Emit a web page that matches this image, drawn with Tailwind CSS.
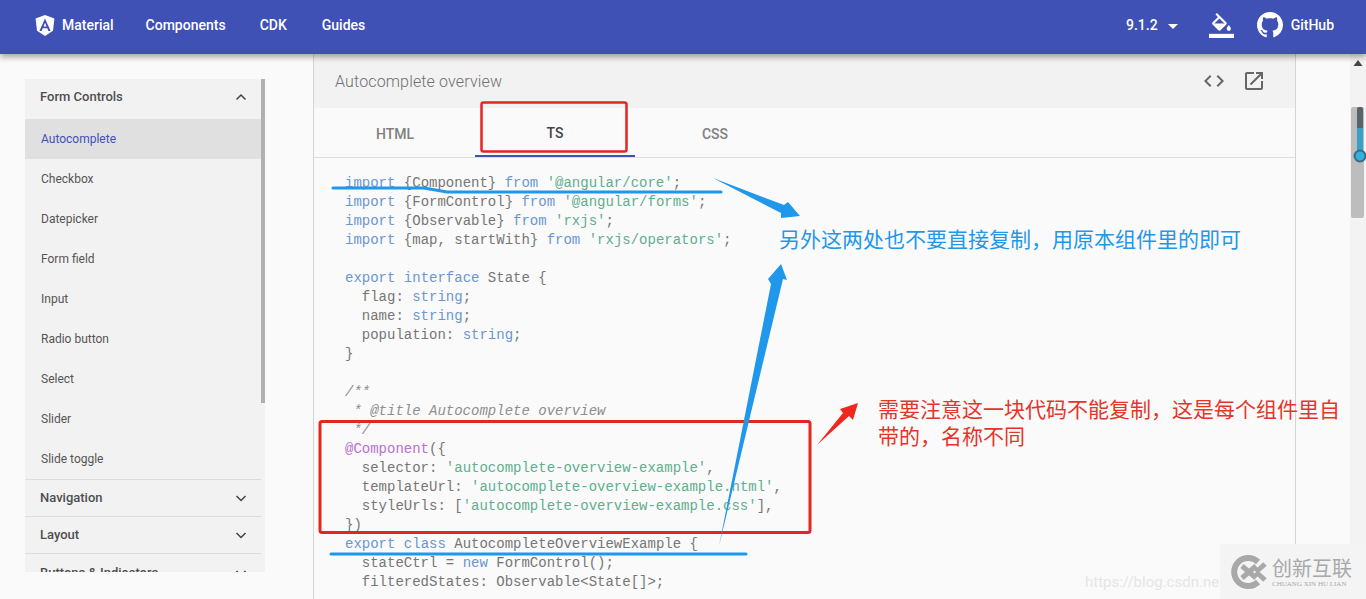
<!DOCTYPE html>
<html lang="zh-CN">
<head>
    <meta charset="UTF-8">
    <meta name="viewport" content="width=device-width, initial-scale=1.0">
    <title>Autocomplete overview</title>
    <script src="https://cdn.jsdelivr.net/npm/@tailwindcss/browser@4"></script>
</head>
<body class="relative h-[599px] overflow-hidden bg-[#fafafa] font-['Roboto',sans-serif]">
    <!-- Top toolbar -->
    <header class="relative z-10 flex h-[54px] items-center bg-[#3f51b5] pb-[4px] pl-[35px] pr-[32px] text-[14px] font-medium text-white shadow-[0_3px_6px_rgba(0,0,0,0.35)]">
        <svg class="mr-[7px] h-[21px] w-[20px]" viewBox="0 0 20 21">
            <path fill="#fff" d="M10 0 L19.4 3.4 L18 15.8 L10 21 L2 15.8 L0.6 3.4 Z"/>
            <path fill="#3f51b5" d="M10 3.6 L4.4 16 H6.6 L7.7 13.2 H12.3 L13.4 16 H15.6 Z M8.5 11.4 L10 7.8 L11.5 11.4 Z"/>
        </svg>
        <a class="mr-[32px]">Material</a>
        <a class="mr-[34px]">Components</a>
        <a class="mr-[35px]">CDK</a>
        <a>Guides</a>
        <div class="ml-auto flex items-center">
            <span>9.1.2</span>
            <span class="ml-[10px] mt-[2px] h-0 w-0 border-x-[5px] border-t-[5px] border-x-transparent border-t-white"></span>
            <svg class="ml-[31px] h-[25px] w-[25px]" viewBox="0 0 24 24" fill="#fff">
                <path d="M16.56 8.94L7.62 0 6.21 1.41l2.38 2.38-5.15 5.15c-.59.59-.59 1.54 0 2.12l5.5 5.5c.29.29.68.44 1.06.44s.77-.15 1.06-.44l5.5-5.5c.59-.58.59-1.53 0-2.12zM5.21 10L10 5.21 14.79 10H5.21zM19 11.5s-2 2.17-2 3.5c0 1.1.9 2 2 2s2-.9 2-2c0-1.33-2-3.5-2-3.5z"/>
                <path d="M0 20h24v4H0z"/>
            </svg>
            <svg class="ml-[23px] h-[26px] w-[26px]" viewBox="0 0 16 16" fill="#fff">
                <path d="M8 0C3.58 0 0 3.58 0 8c0 3.54 2.29 6.53 5.47 7.59.4.07.55-.17.55-.38 0-.19-.01-.82-.01-1.49-2.01.37-2.53-.49-2.69-.94-.09-.23-.48-.94-.82-1.13-.28-.15-.68-.52-.01-.53.63-.01 1.08.58 1.23.82.72 1.21 1.87.87 2.33.66.07-.52.28-.87.51-1.07-1.78-.2-3.64-.89-3.64-3.95 0-.87.31-1.59.82-2.15-.08-.2-.36-1.02.08-2.12 0 0 .67-.21 2.2.82.64-.18 1.32-.27 2-.27.68 0 1.36.09 2 .27 1.53-1.04 2.2-.82 2.2-.82.44 1.1.16 1.92.08 2.12.51.56.82 1.27.82 2.15 0 3.07-1.87 3.75-3.65 3.95.29.25.54.73.54 1.48 0 1.07-.01 1.93-.01 2.2 0 .21.15.46.55.38A8.013 8.013 0 0016 8c0-4.42-3.58-8-8-8z"/>
            </svg>
            <span class="ml-[8px]">GitHub</span>
        </div>
    </header>

    <div class="flex h-[545px]">
        <!-- Side nav -->
        <div class="w-[313px] shrink-0 pl-[25px] pt-[25px]">
            <div class="flex h-[493px] w-[240px] overflow-hidden bg-[#f2f2f2]">
                <nav class="w-[236px] shrink-0 text-[12px] text-[#555]">
                    <div class="flex h-[40px] items-center justify-between pb-[4px] pl-[15px] pr-[14px] text-[13px] font-medium text-[#4f4f4f]">
                        <span>Form Controls</span>
                        <svg class="h-[12px] w-[12px]" viewBox="0 0 12 12" fill="none" stroke="#444" stroke-width="1.5"><path d="M1.5 8.5 L6 4 L10.5 8.5"/></svg>
                    </div>
                    <a class="flex h-[40px] items-center bg-[#e0e0e0] pl-[16px] text-[#3f51b5]">Autocomplete</a>
                    <a class="flex h-[40px] items-center pl-[16px]">Checkbox</a>
                    <a class="flex h-[40px] items-center pl-[16px]">Datepicker</a>
                    <a class="flex h-[40px] items-center pl-[16px]">Form field</a>
                    <a class="flex h-[40px] items-center pl-[16px]">Input</a>
                    <a class="flex h-[40px] items-center pl-[16px]">Radio button</a>
                    <a class="flex h-[40px] items-center pl-[16px]">Select</a>
                    <a class="flex h-[40px] items-center pl-[16px]">Slider</a>
                    <a class="flex h-[41px] items-center border-b border-[#dcdcdc] pl-[16px]">Slide toggle</a>
                    <div class="flex h-[37px] items-center justify-between border-b border-[#dcdcdc] pl-[15px] pr-[14px] text-[13px] font-medium text-[#4f4f4f]">
                        <span>Navigation</span>
                        <svg class="h-[12px] w-[12px]" viewBox="0 0 12 12" fill="none" stroke="#444" stroke-width="1.5"><path d="M1.5 4 L6 8.5 L10.5 4"/></svg>
                    </div>
                    <div class="flex h-[37px] items-center justify-between border-b border-[#dcdcdc] pl-[15px] pr-[14px] text-[13px] font-medium text-[#4f4f4f]">
                        <span>Layout</span>
                        <svg class="h-[12px] w-[12px]" viewBox="0 0 12 12" fill="none" stroke="#444" stroke-width="1.5"><path d="M1.5 4 L6 8.5 L10.5 4"/></svg>
                    </div>
                    <div class="flex h-[37px] items-center justify-between pl-[15px] pr-[14px] text-[13px] font-medium text-[#4f4f4f]">
                        <span>Buttons &amp; Indicators</span>
                        <svg class="h-[12px] w-[12px]" viewBox="0 0 12 12" fill="none" stroke="#444" stroke-width="1.5"><path d="M1.5 4 L6 8.5 L10.5 4"/></svg>
                    </div>
                </nav>
                <div class="h-[324px] w-[4px] bg-[#b0b0b0]"></div>
            </div>
        </div>

        <!-- Example viewer -->
        <main class="w-[983px] shrink-0 border-x border-[#d4d4d4]">
            <div class="flex h-[54px] items-center justify-between bg-[#f2f2f2] pl-[21px] pr-[29px]">
                <span class="pt-[2px] text-[16px] font-light tracking-[0.15px] text-[#707070]">Autocomplete overview</span>
                <div class="flex items-center gap-[16px]">
                    <svg class="h-[24px] w-[24px]" viewBox="0 0 24 24" fill="#666"><path d="M9.4 16.6L4.8 12l4.6-4.6L8 6l-6 6 6 6 1.4-1.4zm5.2 0l4.6-4.6-4.6-4.6L16 6l6 6-6 6-1.4-1.4z"/></svg>
                    <svg class="h-[24px] w-[24px]" viewBox="0 0 24 24" fill="#666"><path d="M19 19H5V5h7V3H5c-1.11 0-2 .9-2 2v14c0 1.1.89 2 2 2h14c1.1 0 2-.9 2-2v-7h-2v7zM14 3v2h3.59l-9.83 9.83 1.41 1.41L19 6.41V10h2V3h-7z"/></svg>
                </div>
            </div>
            <div class="flex h-[50px] border-b border-[#dedede] pl-[1px] text-[14px] font-medium text-[#808080]">
                <div class="flex w-[160px] items-center justify-center pt-[3px]">HTML</div>
                <div class="flex w-[160px] items-center justify-center border-b-2 border-[#3f51b5] pt-[3px] text-[#444]">TS</div>
                <div class="flex w-[160px] items-center justify-center pt-[3px]">CSS</div>
            </div>
            <pre class="pl-[31px] pt-[16px] font-['Liberation_Mono',monospace] text-[14px] leading-[19px] text-[#767676]"><span class="text-[#6a96d2]">import</span> {Component} <span class="text-[#6a96d2]">from</span> <span class="text-[#5fae8e]">'@angular/core'</span>;
<span class="text-[#6a96d2]">import</span> {FormControl} <span class="text-[#6a96d2]">from</span> <span class="text-[#5fae8e]">'@angular/forms'</span>;
<span class="text-[#6a96d2]">import</span> {Observable} <span class="text-[#6a96d2]">from</span> <span class="text-[#5fae8e]">'rxjs'</span>;
<span class="text-[#6a96d2]">import</span> {map, startWith} <span class="text-[#6a96d2]">from</span> <span class="text-[#5fae8e]">'rxjs/operators'</span>;

<span class="text-[#6a96d2]">export</span> <span class="text-[#6a96d2]">interface</span> State {
  flag: <span class="text-[#6a96d2]">string</span>;
  name: <span class="text-[#6a96d2]">string</span>;
  population: <span class="text-[#6a96d2]">string</span>;
}

<span class="italic text-[#8e8e8e]">/**
 * @title Autocomplete overview
 */</span>
<span class="text-[#b870cf]">@Component</span>({
  selector: <span class="text-[#5fae8e]">'autocomplete-overview-example'</span>,
  templateUrl: <span class="text-[#5fae8e]">'autocomplete-overview-example.html'</span>,
  styleUrls: [<span class="text-[#5fae8e]">'autocomplete-overview-example.css'</span>],
})
<span class="text-[#6a96d2]">export</span> <span class="text-[#6a96d2]">class</span> AutocompleteOverviewExample {
  stateCtrl = <span class="text-[#6a96d2]">new</span> FormControl();
  filteredStates: Observable&lt;State[]&gt;;</pre>
        </main>

        <div class="flex-1"></div>

        <!-- Page scrollbar -->
        <div class="w-[16px] shrink-0 bg-[#f3f3f3] pl-[1px] pt-[53px]">
            <div class="h-[111px] w-[13px] rounded-[2px] bg-[#bdbdbd]"></div>
        </div>
    </div>

    <!-- Annotations drawn over the screenshot -->
    <svg class="absolute left-0 top-0 z-20 h-[599px] w-[1366px]" viewBox="0 0 1366 599" fill="none">
        <path d="M1353.5 66 L1358 60 L1362.5 66 Z" fill="#444"/>
        <rect x="1357" y="107" width="6" height="24" rx="2" fill="#56656b"/>
        <rect x="1357" y="128" width="6" height="28" fill="#35a3c8"/>
        <circle cx="1360" cy="156" r="5.5" fill="#34b0dc" stroke="#3b6b80" stroke-width="2"/>

        <rect x="481.5" y="102.5" width="145" height="49" rx="2" stroke="#e5261f" stroke-width="2.5"/>
        <rect x="320" y="421.5" width="490" height="111" rx="2" stroke="#e5261f" stroke-width="3"/>

        <path d="M333 188 L424 188 L447 192 L721 192" stroke="#1f97ea" stroke-width="3" stroke-linecap="round"/>
        <path d="M331 554 L746 554" stroke="#1f97ea" stroke-width="3" stroke-linecap="round"/>

        <path d="M713 178 L784 205 L788 202 L800 216 L781 218 L781 213 Z" fill="#1f97ea"/>
        <path d="M719 546 L771 284 L768 279 L781 264 L787 280 L783 279 Z" fill="#1f97ea"/>
        <path d="M817 445 L843 413 L840 409 L858 403 L853 420 L849 416 Z" fill="#f0271d"/>
    </svg>

    <p class="absolute left-[779px] top-[224px] z-20 whitespace-nowrap font-['Noto_Sans_CJK_SC',sans-serif] text-[21px] leading-[28px] text-[#1f97ea]">另外这两处也不要直接复制，用原本组件里的即可</p>
    <p class="absolute left-[878px] top-[395px] z-20 w-[470px] font-['Noto_Sans_CJK_SC',sans-serif] text-[21px] leading-[27px] text-[#e5352b]">需要注意这一块代码不能复制，这是每个组件里自带的，名称不同</p>

    <!-- Watermarks -->
    <span class="absolute left-[1085px] top-[571px] z-20 font-['Roboto',sans-serif] text-[15px] text-[#e6e6e6]">https://blog.csdn.ne</span>
    <div class="absolute bottom-0 right-0 z-20 flex h-[55px] w-[146px] items-center bg-[#f4f4f4] pl-[11px]">
        <svg class="h-[34px] w-[36px]" viewBox="0 0 36 34" fill="none">
            <path d="M27 7 A14 14 0 1 0 27 27" stroke="#a8a8a8" stroke-width="6"/>
            <path d="M11 11 L25 23 M11 23 L25 11 M25 17 L34 9 M25 17 L34 25" stroke="#a8a8a8" stroke-width="5"/>
        </svg>
        <div class="ml-[5px] flex flex-col">
            <span class="font-['Noto_Sans_CJK_SC',sans-serif] text-[20px] leading-[24px] text-[#a8a8a8]">创新互联</span>
            <span class="whitespace-nowrap font-['Liberation_Serif',serif] text-[7px] leading-[8px] text-[#a8a8a8]">CHUANG XIN HU LIAN</span>
        </div>
    </div>
</body>
</html>
